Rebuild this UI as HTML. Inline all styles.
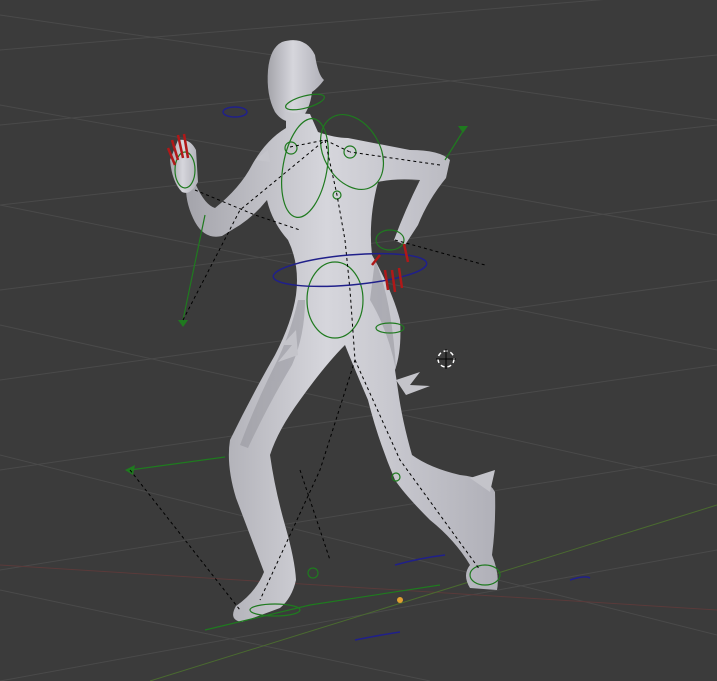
<!DOCTYPE html>
<html><head><style>
html,body{margin:0;padding:0;background:#3b3b3b;width:717px;height:681px;overflow:hidden}
svg{display:block}
</style></head><body>
<svg width="717" height="681" viewBox="0 0 717 681" xmlns="http://www.w3.org/2000/svg">
<defs>
<linearGradient id="sk" x1="0" y1="0" x2="1" y2="0">
<stop offset="0" stop-color="#a4a4ab"/><stop offset="0.45" stop-color="#d6d6dc"/><stop offset="1" stop-color="#b0b0b8"/>
</linearGradient>
</defs>
<rect width="717" height="681" fill="#3b3b3b"/>
<g stroke="#4a4a4a" stroke-width="1" fill="none">
<path d="M0 50 L717 -10"/><path d="M0 125 L717 55"/><path d="M0 205 L717 125"/><path d="M0 290 L717 200"/><path d="M0 380 L717 280"/><path d="M0 470 L717 365"/><path d="M0 570 L717 455"/><path d="M0 681 L717 550"/>
<path d="M0 15 L717 120"/><path d="M0 105 L717 235"/><path d="M0 205 L717 350"/><path d="M0 325 L717 485"/><path d="M0 455 L717 635"/><path d="M0 590 L430 681"/>
</g>
<path d="M0 565 L717 610" stroke="#5a3a3a" stroke-width="1"/>
<path d="M150 681 L717 505" stroke="#4a6a30" stroke-width="1"/>
<g fill="url(#sk)" stroke="none">
<path d="M282 42 Q305 35 315 55 Q318 75 324 80 Q318 88 312 92 Q310 110 300 120 Q285 126 275 112 Q266 95 268 70 Q270 48 282 42Z"/>
<path d="M286 112 L310 114 L318 132 Q335 138 348 138 L410 150 Q440 150 450 160 L446 178 Q428 200 418 225 L405 245 L394 240 Q405 210 420 180 Q395 178 378 182 Q368 220 372 255 Q392 290 400 320 Q402 350 395 370 L398 390 Q402 420 412 455 Q430 468 460 475 Q488 478 495 492 Q496 525 492 555 Q500 575 497 590 L470 588 Q462 575 470 565 Q455 540 430 520 Q405 495 395 480 Q378 440 368 400 Q355 370 345 345 Q325 365 300 400 Q278 430 270 455 Q275 490 285 525 Q295 560 296 580 Q292 598 280 608 L242 622 Q228 620 236 606 Q256 592 264 572 Q250 535 236 498 Q226 465 230 440 Q252 395 275 355 Q292 322 296 295 Q300 265 288 240 Q272 222 267 200 Q255 215 240 225 L222 236 Q205 240 195 222 Q186 205 186 188 L196 185 Q205 205 215 208 Q240 188 252 165 Q266 140 286 128Z"/>
<path d="M178 140 Q190 138 196 150 L198 182 Q190 196 182 192 Q172 182 170 160Z"/>
</g>
<g fill="#95959d" opacity="0.55">
<path d="M298 300 Q290 335 275 365 Q255 405 240 445 L248 448 Q268 405 292 365 Q305 335 305 300Z"/>
<path d="M375 260 Q392 300 396 370 Q388 330 370 300Z"/>
</g>
<g fill="#c4c4ca"><path d="M296 330 L282 345 L292 345 L278 362 L298 355Z"/><path d="M396 380 L420 372 L410 385 L430 386 L406 395Z"/><path d="M470 478 L495 470 L490 492Z"/><path d="M268 150 L255 160 L270 162Z"/></g>
<g stroke="#1f7a1f" stroke-width="1.2" fill="none">
<ellipse cx="305" cy="168" rx="22" ry="50" transform="rotate(10 305 168)"/>
<ellipse cx="352" cy="152" rx="28" ry="40" transform="rotate(-30 352 152)"/>
<circle cx="291" cy="148" r="6"/><circle cx="350" cy="152" r="6"/><circle cx="337" cy="195" r="4"/>
<ellipse cx="305" cy="102" rx="20" ry="6" transform="rotate(-15 305 102)"/>
<ellipse cx="335" cy="300" rx="28" ry="38"/>
<ellipse cx="390" cy="328" rx="14" ry="5"/>
<ellipse cx="185" cy="170" rx="10" ry="18"/>
<ellipse cx="390" cy="240" rx="14" ry="10"/>
<path d="M130 470 L225 457"/><path d="M183 320 L205 215"/><path d="M445 160 L465 128"/>
<path d="M205 630 L310 605 L440 585"/>
<ellipse cx="275" cy="610" rx="25" ry="6"/><ellipse cx="485" cy="575" rx="15" ry="10"/>
<circle cx="313" cy="573" r="5"/><circle cx="396" cy="477" r="4"/>
</g>
<g fill="#1f7a1f"><path d="M125 470 L135 465 L133 475Z"/><path d="M178 320 L188 320 L183 327Z"/><path d="M458 126 L468 126 L463 133Z"/></g>
<g stroke="#000" stroke-width="1" stroke-dasharray="3 3" fill="none">
<path d="M290 147 L325 140 L350 152"/><path d="M325 140 L337 195 L345 240 L350 290 L355 360 L320 470 L260 600"/>
<path d="M355 360 L400 460 L480 570"/><path d="M130 470 L240 610"/><path d="M300 470 L330 560"/>
<path d="M183 320 L240 210 L325 140"/><path d="M195 190 L255 215 L300 230"/><path d="M395 240 L485 265"/>
<path d="M440 165 L350 152"/>
</g>
<ellipse cx="350" cy="270" rx="77" ry="15" transform="rotate(-5 350 270)" stroke="#20208a" stroke-width="1.5" fill="none"/>
<g stroke="#20208a" stroke-width="1.5" fill="none">
<path d="M395 565 Q420 558 445 555"/><path d="M355 640 Q380 635 400 632"/><path d="M570 580 Q585 575 590 578"/>
<ellipse cx="235" cy="112" rx="12" ry="5"/>
</g>
<g stroke="#b01818" stroke-width="2.5"><path d="M172 140 L178 160"/><path d="M178 135 L183 158"/><path d="M184 134 L188 158"/><path d="M168 148 L175 165"/>
<path d="M385 270 L388 290"/><path d="M392 270 L395 292"/><path d="M399 268 L402 288"/><path d="M404 244 L408 262"/><path d="M380 255 L372 265"/></g>
<circle cx="446" cy="359" r="8" fill="none" stroke="#fff" stroke-width="1.5" stroke-dasharray="4 3"/>
<path d="M436 359 L456 359 M446 349 L446 369" stroke="#000" stroke-width="1"/>
<circle cx="400" cy="600" r="3" fill="#e0a030"/>
</svg>
</body></html>
